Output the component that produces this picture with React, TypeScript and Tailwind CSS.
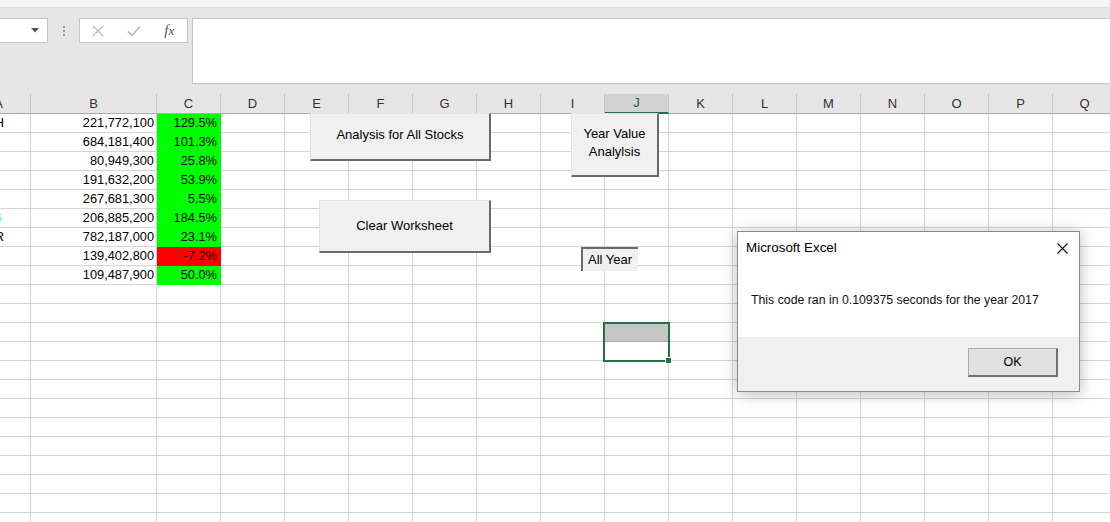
import React from 'react';

const COLS = ['A', 'B', 'C', 'D', 'E', 'F', 'G', 'H', 'I', 'J', 'K', 'L', 'M', 'N', 'O', 'P', 'Q'];

type Row = { a?: string; aColor?: string; aPad?: string; b?: string; c?: string; neg?: boolean };

const DATA: Row[] = [
  { a: 'ENPH', b: '221,772,100', c: '129.5%' },
  { b: '684,181,400', c: '101.3%' },
  { b: '80,949,300', c: '25.8%' },
  { b: '191,632,200', c: '53.9%' },
  { b: '267,681,300', c: '5.5%' },
  { a: 'SEDG', aColor: 'text-[#3ef0ff]', aPad: 'pr-[28px]', b: '206,885,200', c: '184.5%' },
  { a: 'SPWR', b: '782,187,000', c: '23.1%' },
  { b: '139,402,800', c: '-7.2%', neg: true },
  { b: '109,487,900', c: '50.0%' },
];

const ROW_COUNT = 22;

function FormulaBar() {
  return (
    <div className="h-[86px] bg-[#e6e6e6] pt-[10px] flex items-start">
      <div className="w-[48px] h-[25px] bg-white border border-l-0 border-[#c6c6c6] flex items-center justify-end pr-[8px]">
        <svg width="8" height="5" viewBox="0 0 8 5">
          <path d="M0 0 L8 0 L4 4.5 Z" fill="#555" />
        </svg>
      </div>
      <div className="w-[31px] h-[25px] flex flex-col items-center justify-center gap-[2px]">
        <div className="w-[2px] h-[2px] bg-[#9a9a9a]" />
        <div className="w-[2px] h-[2px] bg-[#9a9a9a]" />
        <div className="w-[2px] h-[2px] bg-[#9a9a9a]" />
      </div>
      <div className="w-[109px] h-[25px] bg-white border border-[#c6c6c6] flex items-center">
        <div className="w-[36px] flex justify-center">
          <svg width="12" height="12" viewBox="0 0 12 12">
            <path d="M1 1 L11 11 M11 1 L1 11" stroke="#bdbdbd" strokeWidth="1.4" fill="none" />
          </svg>
        </div>
        <div className="w-[36px] flex justify-center">
          <svg width="14" height="12" viewBox="0 0 14 12">
            <path d="M1 6.5 L5 10.5 L13 1.5" stroke="#bdbdbd" strokeWidth="1.8" fill="none" />
          </svg>
        </div>
        <div className="w-[36px] flex justify-center">
          <span className="font-['Liberation_Serif',serif] italic text-[15px] text-[#555] leading-none">
            f<span className="text-[13px]">x</span>
          </span>
        </div>
      </div>
      <div className="ml-[4px] flex-1 h-[66px] bg-white border border-r-0 border-[#c6c6c6]" />
    </div>
  );
}

function HeaderRow() {
  return (
    <>
      {COLS.map((c) =>
        c === 'J' ? (
          <div
            key={c}
            className="h-[20px] bg-[#d2d2d2] border-r border-[#c6c6c6] border-b-2 border-b-[#217346] flex items-center justify-center text-[13px] text-[#1f5c3a]"
          >
            {c}
          </div>
        ) : (
          <div
            key={c}
            className="h-[20px] bg-[#e6e6e6] border-r border-[#c6c6c6] border-b border-b-[#ababab] flex items-center justify-center text-[13px] text-[#333]"
          >
            {c}
          </div>
        )
      )}
    </>
  );
}

function DataRow({ index }: { index: number }) {
  const row = DATA[index];
  return (
    <>
      {COLS.map((c) => {
        if (c === 'A') {
          return (
            <div key={c} className="h-[19px] bg-white border-r border-b border-[#d4d4d4] flex items-end pb-[2px] justify-end overflow-hidden">
              {row?.a && (
                <span className={`text-[12.8px] leading-[15px] ${row.aColor ?? 'text-black'} ${row.aPad ?? 'pr-[26px]'}`}>{row.a}</span>
              )}
            </div>
          );
        }
        if (c === 'B') {
          return (
            <div key={c} className="h-[19px] bg-white border-r border-b border-[#d4d4d4] flex items-end pb-[2px] justify-end pr-[2px] text-[12.8px] leading-[15px] text-black">
              {row?.b}
            </div>
          );
        }
        if (c === 'C' && row) {
          return row.neg ? (
            <div key={c} className="h-[19px] bg-[#ff0000] border-r border-b border-[#ff0000] flex items-end pb-[2px] justify-end pr-[3px] text-[12.8px] leading-[15px] text-black">
              {row.c}
            </div>
          ) : (
            <div key={c} className="h-[19px] bg-[#00ff00] border-r border-b border-[#00ff00] flex items-end pb-[2px] justify-end pr-[3px] text-[12.8px] leading-[15px] text-black">
              {row.c}
            </div>
          );
        }
        if (c === 'J' && index === 11) {
          return <div key={c} className="h-[19px] bg-[#c6c6c6] border-r border-b border-[#a8a8a8]" />;
        }
        return <div key={c} className="h-[19px] bg-white border-r border-b border-[#d4d4d4]" />;
      })}
    </>
  );
}

function SheetButton({ className, children }: { className: string; children: React.ReactNode }) {
  return (
    <div
      className={`absolute bg-[#f0f0f0] border-t border-l border-[#e2e2e2] border-b-2 border-r-2 border-b-[#6b6b6b] border-r-[#6b6b6b] flex items-center justify-center text-center text-[13px] leading-[18px] text-black ${className}`}
    >
      {children}
    </div>
  );
}

function MessageBox() {
  return (
    <div className="absolute left-[737px] top-[231px] w-[343px] h-[161px] bg-white border border-[#8c8c8c] shadow-[0_2px_14px_rgba(0,0,0,0.28)] flex flex-col font-['Liberation_Sans',Arial,sans-serif]">
      <div className="h-[31px] flex items-center justify-between pl-[8px] pr-[11px] pt-[1px]">
        <span className="text-[13.4px] text-black">Microsoft Excel</span>
        <svg width="11" height="11" viewBox="0 0 11 11">
          <path d="M0.5 0.5 L10.5 10.5 M10.5 0.5 L0.5 10.5" stroke="#111" strokeWidth="1.1" fill="none" />
        </svg>
      </div>
      <div className="h-[74px] flex items-center pl-[13px] pt-[1px]">
        <span className="text-[12.3px] text-[#111]">This code ran in 0.109375 seconds for the year 2017</span>
      </div>
      <div className="flex-1 bg-[#f0f0f0] flex justify-end items-start pt-[11px] pr-[21px]">
        <div className="w-[90px] h-[29px] bg-[#e1e1e1] border border-[#adadad] border-b-2 border-r-2 border-b-[#707070] border-r-[#707070] flex items-center justify-center text-[12.5px] text-black">
          OK
        </div>
      </div>
    </div>
  );
}

export default function App() {
  return (
    <div className="relative w-[1110px] h-[522px] overflow-hidden bg-white font-['Liberation_Sans',Arial,sans-serif]">
      <div className="h-[8px] bg-[#f3f3f3] border-b border-[#d9d9d9]" />
      <FormulaBar />
      <div className="ml-[-33px] grid grid-cols-[64px_126px_repeat(15,64px)]">
        <HeaderRow />
        {Array.from({ length: ROW_COUNT }, (_, i) => (
          <DataRow key={i} index={i} />
        ))}
      </div>

      <SheetButton className="left-[310px] top-[113px] w-[181px] h-[48px] pb-[4px]">Analysis for All Stocks</SheetButton>
      <SheetButton className="left-[319px] top-[200px] w-[172px] h-[53px]">Clear Worksheet</SheetButton>
      <SheetButton className="left-[571px] top-[113px] w-[88px] h-[64px] pb-[4px]">
        Year Value
        <br />
        Analylsis
      </SheetButton>

      <div className="absolute left-[581px] top-[247px] w-[57px] h-[24px] bg-[#f0f0f0] border-t-2 border-l-2 border-[#6b6b6b] flex items-center pl-[5px] text-[13px] text-black">
        All Year
      </div>

      <div className="absolute left-[603px] top-[322px] w-[67px] h-[40px] border-2 border-[#217346]" />
      <div className="absolute left-[665px] top-[357px] w-[7px] h-[7px] bg-[#217346] border border-white" />

      <MessageBox />
    </div>
  );
}
